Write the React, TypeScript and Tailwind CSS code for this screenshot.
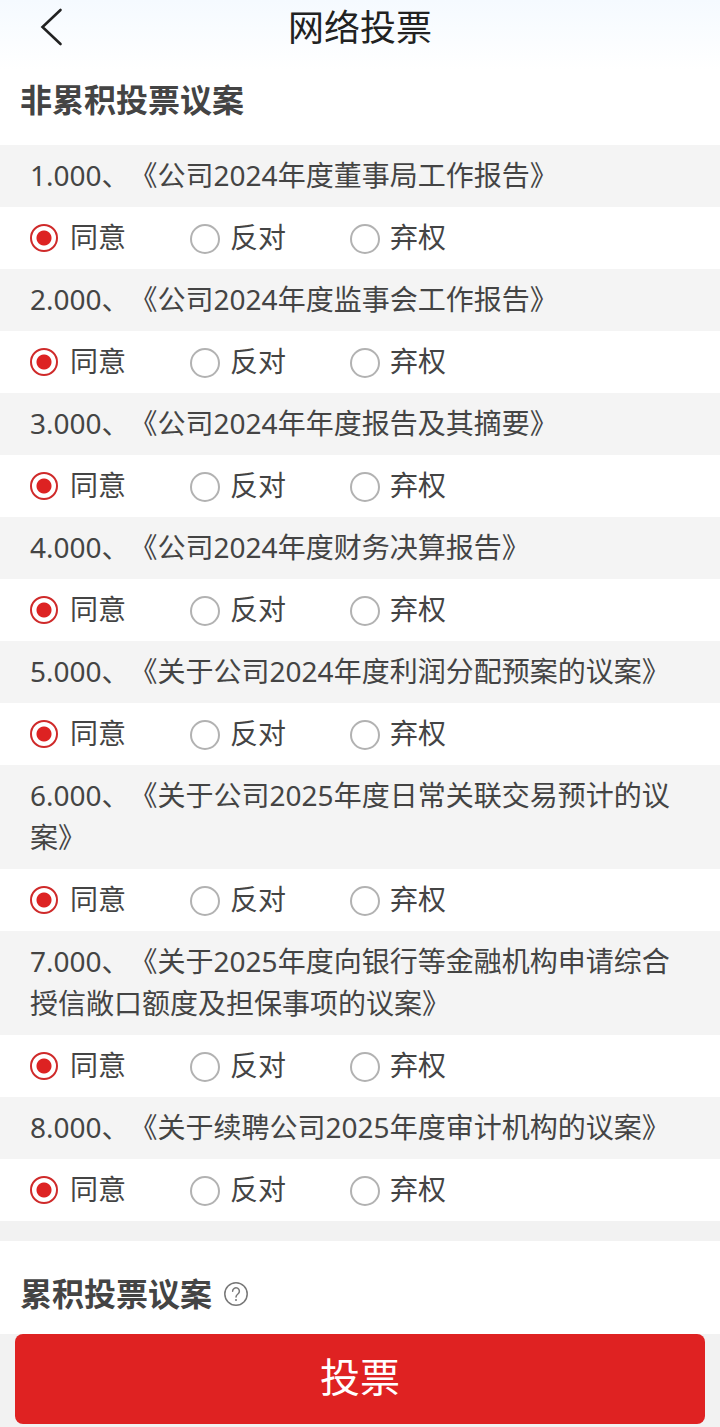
import { ChangeEvent, useState } from "react";

const proposals = [
  "1.000、《公司2024年度董事局工作报告》",
  "2.000、《公司2024年度监事会工作报告》",
  "3.000、《公司2024年年度报告及其摘要》",
  "4.000、《公司2024年度财务决算报告》",
  "5.000、《关于公司2024年度利润分配预案的议案》",
  "6.000、《关于公司2025年度日常关联交易预计的议案》",
  "7.000、《关于2025年度向银行等金融机构申请综合授信敞口额度及担保事项的议案》",
  "8.000、《关于续聘公司2025年度审计机构的议案》",
];

const options = ["同意", "反对", "弃权"];

interface ProposalProps {
  title: string;
  name: string;
  value: string;
  onChange: (value: string) => void;
}

function Proposal({ title, name, value, onChange }: ProposalProps) {
  return (
    <fieldset>
      <legend className="w-full bg-[#f4f4f4] px-[30px] pt-[9px] pb-[11px]">{title}</legend>
      <div className="flex px-[30px] pt-[9px] pb-[11px]">
        {options.map((option) => (
          <label key={option} className="flex w-40 items-start">
            <input
              type="radio"
              name={name}
              value={option}
              checked={value === option}
              onChange={(e: ChangeEvent<HTMLInputElement>) => onChange(e.target.value)}
              className="mt-2 mr-[10px] size-[30px] shrink-0 appearance-none rounded-full border-2 border-[#b2b2b2] bg-white checked:mr-3 checked:size-7 checked:border-[#cf2a2a] checked:bg-[radial-gradient(circle,#dd2222_7px,transparent_8px)]"
            />
            {option}
          </label>
        ))}
      </div>
    </fieldset>
  );
}

export default function App() {
  const [votes, setVotes] = useState<string[]>(proposals.map(() => "同意"));

  const vote = (index: number, value: string) => {
    setVotes(votes.map((v, i) => (i === index ? value : v)));
  };

  return (
    <div className="bg-white font-['Noto_Sans','Noto_Sans_CJK_SC',sans-serif] text-[28px] leading-[42px] text-[#444444] [text-spacing-trim:space-all]">
      <header className="relative h-[70px] bg-linear-to-b from-[#f5faff] to-white">
        <button type="button" aria-label="返回" className="absolute top-2 left-10">
          <svg
            width="24"
            height="38"
            viewBox="0 0 24 38"
            fill="none"
            stroke="#222222"
            strokeWidth="2.6"
            strokeLinecap="round"
          >
            <path d="M20.5 2 2.5 19 20.5 36" />
          </svg>
        </button>
        <h1 className="pt-1 text-center text-[36px] leading-[48px] text-[#222222]">网络投票</h1>
      </header>

      <main>
        <h2 className="flex h-[75px] items-start px-5 pt-2 text-[32px] leading-[44px] font-bold">
          非累积投票议案
        </h2>
        {proposals.map((title, i) => (
          <Proposal
            key={title}
            title={title}
            name={`proposal-${i + 1}`}
            value={votes[i]}
            onChange={(value) => vote(i, value)}
          />
        ))}
        <div className="h-5 bg-[#f2f2f2]" />
        <div className="flex h-[93px] items-center gap-3 px-5 pt-3">
          <h2 className="text-[32px] leading-[44px] font-bold">累积投票议案</h2>
          <button type="button" aria-label="说明">
            <svg
              width="24"
              height="24"
              viewBox="0 0 24 24"
              fill="none"
              stroke="#777777"
              strokeWidth="1.5"
              strokeLinecap="round"
            >
              <circle cx="12" cy="12" r="11.2" />
              <path d="M8.6 9.2a3.4 3.4 0 1 1 5.3 2.8c-1.3.9-1.9 1.4-1.9 3" />
              <circle cx="12" cy="18" r="1" fill="#777777" stroke="none" />
            </svg>
          </button>
        </div>
      </main>

      <footer className="bg-[#f2f2f2] px-[15px] pb-[3px]">
        <button
          type="button"
          className="h-[90px] w-full rounded-lg bg-[#df2222] pb-1 text-[40px] text-white"
        >
          投票
        </button>
      </footer>
    </div>
  );
}
